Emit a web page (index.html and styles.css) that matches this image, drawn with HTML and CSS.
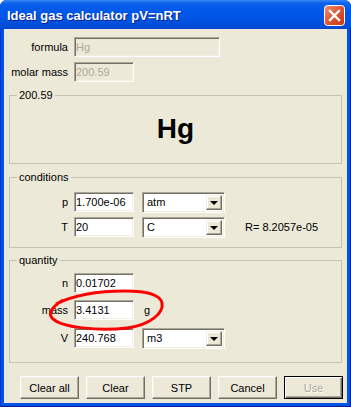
FILE: index.html
```html
<!DOCTYPE html>
<html>
  <head>
    <title>Ideal gas calculator</title>
    <link rel="stylesheet" href="styles.css">
  </head>
  <body>
    <div class="window">
      <div class="titlebar">
        <span class="title">Ideal gas calculator pV=nRT</span>
        <span class="close">
          <svg width="21" height="21" viewBox="0 0 21 21">
            <defs>
              <linearGradient id="closeFill" x1="0" y1="0" x2="1" y2="1">
                <stop offset="0" stop-color="#F0947A"/>
                <stop offset="0.5" stop-color="#E0542F"/>
                <stop offset="1" stop-color="#C2391B"/>
              </linearGradient>
            </defs>
            <rect x="0.5" y="0.5" width="20" height="20" rx="3" fill="url(#closeFill)" stroke="#fff"/>
            <path d="M6 6 L15 15 M15 6 L6 15" stroke="#fff" stroke-width="2.4" stroke-linecap="square"/>
          </svg>
        </span>
      </div>

      <div class="client">
        <div class="top">
          <div class="row">
            <label class="lbl">formula</label>
            <input class="field wide" value="Hg" disabled>
          </div>
          <div class="row">
            <label class="lbl">molar mass</label>
            <input class="field" value="200.59" disabled>
          </div>
        </div>

        <fieldset class="group result">
          <legend>200.59</legend>
          <div class="symbol">Hg</div>
        </fieldset>

        <fieldset class="group conditions">
          <legend>conditions</legend>
          <div class="row">
            <label class="lbl">p</label>
            <input class="field" value="1.700e-06">
            <div class="combo"><span class="combo-text">atm</span><span class="drop"></span></div>
          </div>
          <div class="row">
            <label class="lbl">T</label>
            <input class="field" value="20">
            <div class="combo"><span class="combo-text">C</span><span class="drop"></span></div>
            <span class="rconst">R= 8.2057e-05</span>
          </div>
        </fieldset>

        <fieldset class="group quantity">
          <legend>quantity</legend>
          <div class="row">
            <label class="lbl">n</label>
            <input class="field" value="0.01702">
          </div>
          <div class="row">
            <label class="lbl">mass</label>
            <input class="field" value="3.4131">
            <span class="unit">g</span>
          </div>
          <div class="row">
            <label class="lbl">V</label>
            <input class="field" value="240.768">
            <div class="combo"><span class="combo-text">m3</span><span class="drop"></span></div>
          </div>
        </fieldset>

        <div class="buttons">
          <button class="btn">Clear all</button>
          <button class="btn">Clear</button>
          <button class="btn">STP</button>
          <button class="btn">Cancel</button>
          <button class="btn default" disabled>Use</button>
        </div>
      </div>

      <!-- red pen mark drawn over the mass row -->
      <svg class="scribble" width="351" height="407" viewBox="0 0 351 407">
        <path d="M63 300 C55 305, 47 312, 52 318 C61 328, 100 331, 127 328 C150 325, 164 313, 162 303 C160 294, 145 291, 125 291 C100 291, 76 294, 56 304" fill="none" stroke="#F00" stroke-width="3"/>
      </svg>
    </div>
  </body>
</html>
```

FILE: styles.css
```css
body{
  margin: 0;
  font-family: "Liberation Sans", Arial, sans-serif;
  font-size: 11px;
}

.window{
  position: relative;
  width: 351px;
  height: 407px;
  display: flex;
  flex-direction: column;
  background: #0054E3;
  border-radius: 7px 7px 0 0;
  box-shadow: inset 1px 0 #0831D9, inset -1px 0 #001EA0, inset 0 -1px #001EA0;
}

.titlebar{
  height: 29px;
  display: flex;
  align-items: center;
  justify-content: space-between;
  padding: 0 6px 0 7px;
  border-radius: 7px 7px 0 0;
  background: linear-gradient(#3A8CF8 0, #1A6DF0 2px, #0A5EEC 4px, #0058E8 12px, #0054E2 20px, #004CD6 26px, #0046CC 29px);
}
.title{
  color: white;
  font-weight: bold;
  font-size: 13px;
  text-shadow: 1px 1px #0A1E8C;
  margin-top: 1px;
}
.close{
  display: flex;
  margin-top: 2px;
}

.client{
  flex: 1;
  margin: 0 4px 4px 4px;
  background: #ECE9D8;
}

.top{
  padding-top: 8px;
  display: flex;
  flex-direction: column;
  gap: 5px;
}
.row{
  display: flex;
  align-items: flex-start;
}
.lbl{
  width: 58px;
  margin-right: 6px;
  text-align: right;
  line-height: 20px;
}
.top .lbl{
  width: 64px;
}

.field{
  box-sizing: border-box;
  width: 60px;
  height: 20px;
  margin: 0;
  padding: 0 1px;
  font-family: inherit;
  font-size: 11px;
  color: black;
  background: white;
  border: 1px solid;
  border-color: #ACA899 #fff #fff #ACA899;
  box-shadow: inset 1px 1px #716F64, inset -1px -1px #F1EFE2;
  outline: none;
}
.field.wide{
  width: 146px;
}
.field:disabled{
  background: #ECE9D8;
  color: #ACA899;
}

.combo{
  box-sizing: border-box;
  width: 83px;
  height: 21px;
  margin-left: 8px;
  display: flex;
  align-items: stretch;
  background: white;
  border: 1px solid;
  border-color: #ACA899 #fff #fff #ACA899;
  box-shadow: inset 1px 1px #716F64, inset -1px -1px #F1EFE2;
  padding: 2px;
}
.combo-text{
  flex: 1;
  line-height: 15px;
  padding-left: 2px;
}
.drop{
  box-sizing: border-box;
  width: 16px;
  display: flex;
  align-items: center;
  justify-content: center;
  background: #ECE9D8;
  border: 1px solid;
  border-color: #F1EFE2 #716F64 #716F64 #F1EFE2;
  box-shadow: inset -1px -1px #ACA899, inset 1px 1px #fff;
}
.drop::after{
  content: "";
  border-left: 4px solid transparent;
  border-right: 4px solid transparent;
  border-top: 4px solid black;
  margin-top: 1px;
}

.group{
  margin: 7px 5px 0 5px;
  padding: 0;
  min-width: 0;
  border: 1px solid #C5C2B2;
}
.group legend{
  margin-left: 7px;
  padding: 0 2px;
  line-height: 13px;
}
.symbol{
  box-sizing: border-box;
  height: 61px;
  padding-bottom: 7px;
  display: flex;
  align-items: center;
  justify-content: center;
  font-size: 28px;
  font-weight: bold;
}

.conditions{
  padding: 8px 0 9px 0;
}
.conditions .row + .row{
  margin-top: 4px;
}
.rconst{
  margin-left: 20px;
  line-height: 21px;
}

.quantity{
  margin-top: 6px;
  padding: 6px 0 13px 0;
}
.quantity .row + .row{
  margin-top: 7px;
}
.unit{
  margin-left: 10px;
  line-height: 21px;
}

.buttons{
  margin-top: 13px;
  padding-left: 16px;
  display: flex;
  gap: 7px;
}
.btn{
  box-sizing: border-box;
  width: 59px;
  height: 23px;
  padding: 0;
  font-family: inherit;
  font-size: 11px;
  color: black;
  background: #ECE9D8;
  border: 1px solid;
  border-color: #fff #716F64 #716F64 #fff;
  box-shadow: inset -1px -1px #ACA899, inset 1px 1px #F1EFE2;
}
.btn.default{
  border: 1px solid black;
  box-shadow: inset 1px 1px #fff, inset -1px -1px #716F64, inset -2px -2px #ACA899;
}
.btn:disabled{
  color: #ACA899;
  text-shadow: 1px 1px #fff;
}

.scribble{
  position: absolute;
  left: 0;
  top: 0;
  pointer-events: none;
}
```
